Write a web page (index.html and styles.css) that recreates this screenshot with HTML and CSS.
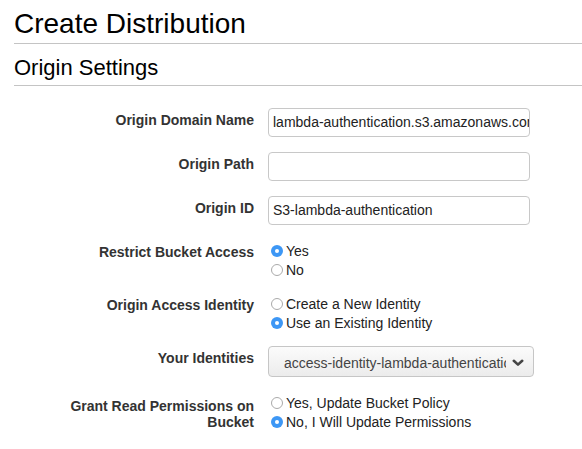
FILE: index.html
```html
<!DOCTYPE html>
<html>
<head>
<meta charset="utf-8">
<link rel="stylesheet" href="styles.css">
</head>
<body>
<div class="page">
  <h1 class="title">Create Distribution</h1>
  <h2 class="section">Origin Settings</h2>
  <div class="form">
    <div class="label">Origin Domain Name</div>
    <div class="control"><div class="input">lambda-authentication.s3.amazonaws.com</div></div>

    <div class="label">Origin Path</div>
    <div class="control"><div class="input"></div></div>

    <div class="label">Origin ID</div>
    <div class="control"><div class="input">S3-lambda-authentication</div></div>

    <div class="label">Restrict Bucket Access</div>
    <div class="control radios">
      <div class="radio"><span class="dot on"></span>Yes</div>
      <div class="radio"><span class="dot"></span>No</div>
    </div>

    <div class="label">Origin Access Identity</div>
    <div class="control radios">
      <div class="radio"><span class="dot"></span>Create a New Identity</div>
      <div class="radio"><span class="dot on"></span>Use an Existing Identity</div>
    </div>

    <div class="label">Your Identities</div>
    <div class="control">
      <div class="select"><span class="select-text">access-identity-lambda-authentication.s3.amazonaws.com</span>
        <svg class="chev" width="12" height="8" viewBox="0 0 12 8"><path d="M1.8 1.8 L6 5.6 L10.2 1.8" fill="none" stroke="#444" stroke-width="2.6" stroke-linecap="round" stroke-linejoin="round"/></svg>
      </div>
    </div>

    <div class="label multi">Grant Read Permissions on<br>Bucket</div>
    <div class="control radios">
      <div class="radio"><span class="dot"></span>Yes, Update Bucket Policy</div>
      <div class="radio"><span class="dot on"></span>No, I Will Update Permissions</div>
    </div>
  </div>
</div>
</body>
</html>
```

FILE: styles.css
```css
html, body {
  margin: 0;
  padding: 0;
  background: #fff;
}
body {
  font-family: "Liberation Sans", Arial, Helvetica, sans-serif;
  color: #222;
  overflow: hidden;
}
.page {
  padding-left: 14px;
}
.title {
  margin: 8px 0 0 0;
  font-size: 28px;
  font-weight: normal;
  line-height: 32px;
  color: #000;
  padding-bottom: 3px;
  border-bottom: 1px solid #c4c4c4;
}
.section {
  margin: 11px 0 0 0;
  font-size: 22px;
  font-weight: normal;
  line-height: 26px;
  color: #000;
  padding-bottom: 4px;
  border-bottom: 1px solid #c4c4c4;
}
.form {
  margin-top: 22px;
  display: grid;
  grid-template-columns: 240px 1fr;
  column-gap: 14px;
  row-gap: 15px;
}
.label {
  text-align: right;
  font-weight: bold;
  font-size: 14px;
  line-height: 17px;
  padding-top: 4px;
  color: #333;
}
.label.multi {
  line-height: 16px;
  padding-top: 6px;
}
.control {
  font-size: 14px;
}
.input {
  box-sizing: border-box;
  width: 262px;
  height: 29px;
  border: 1px solid #c8c8c8;
  border-radius: 4px;
  padding: 0 4px;
  line-height: 27px;
  white-space: nowrap;
  overflow: hidden;
  color: #222;
}
.radios {
  display: flex;
  flex-direction: column;
  padding-top: 2px;
  margin-bottom: -2px;
}
.radio {
  display: flex;
  align-items: center;
  height: 19px;
  line-height: 19px;
  color: #222;
}
.dot {
  box-sizing: border-box;
  width: 12px;
  height: 12px;
  border-radius: 50%;
  border: 1px solid #aaa;
  background: #fff;
  margin: 0 3px 0 3px;
  flex: none;
  position: relative;
  top: -1px;
}
.dot.on {
  border: none;
  background: #3d97f5;
  display: flex;
  align-items: center;
  justify-content: center;
}
.dot.on::after {
  content: "";
  width: 4px;
  height: 4px;
  border-radius: 50%;
  background: #fff;
}
.select {
  box-sizing: border-box;
  width: 266px;
  height: 31px;
  border: 1px solid #c6c6c6;
  border-radius: 4px;
  background: linear-gradient(#fbfbfb, #ececec);
  display: flex;
  align-items: center;
  padding: 2px 9px 0 15px;
  gap: 6px;
}
.select-text {
  flex: 1;
  min-width: 0;
  overflow: hidden;
  white-space: nowrap;
  color: #444;
  font-size: 14px;
}
.chev {
  flex: none;
}
```
